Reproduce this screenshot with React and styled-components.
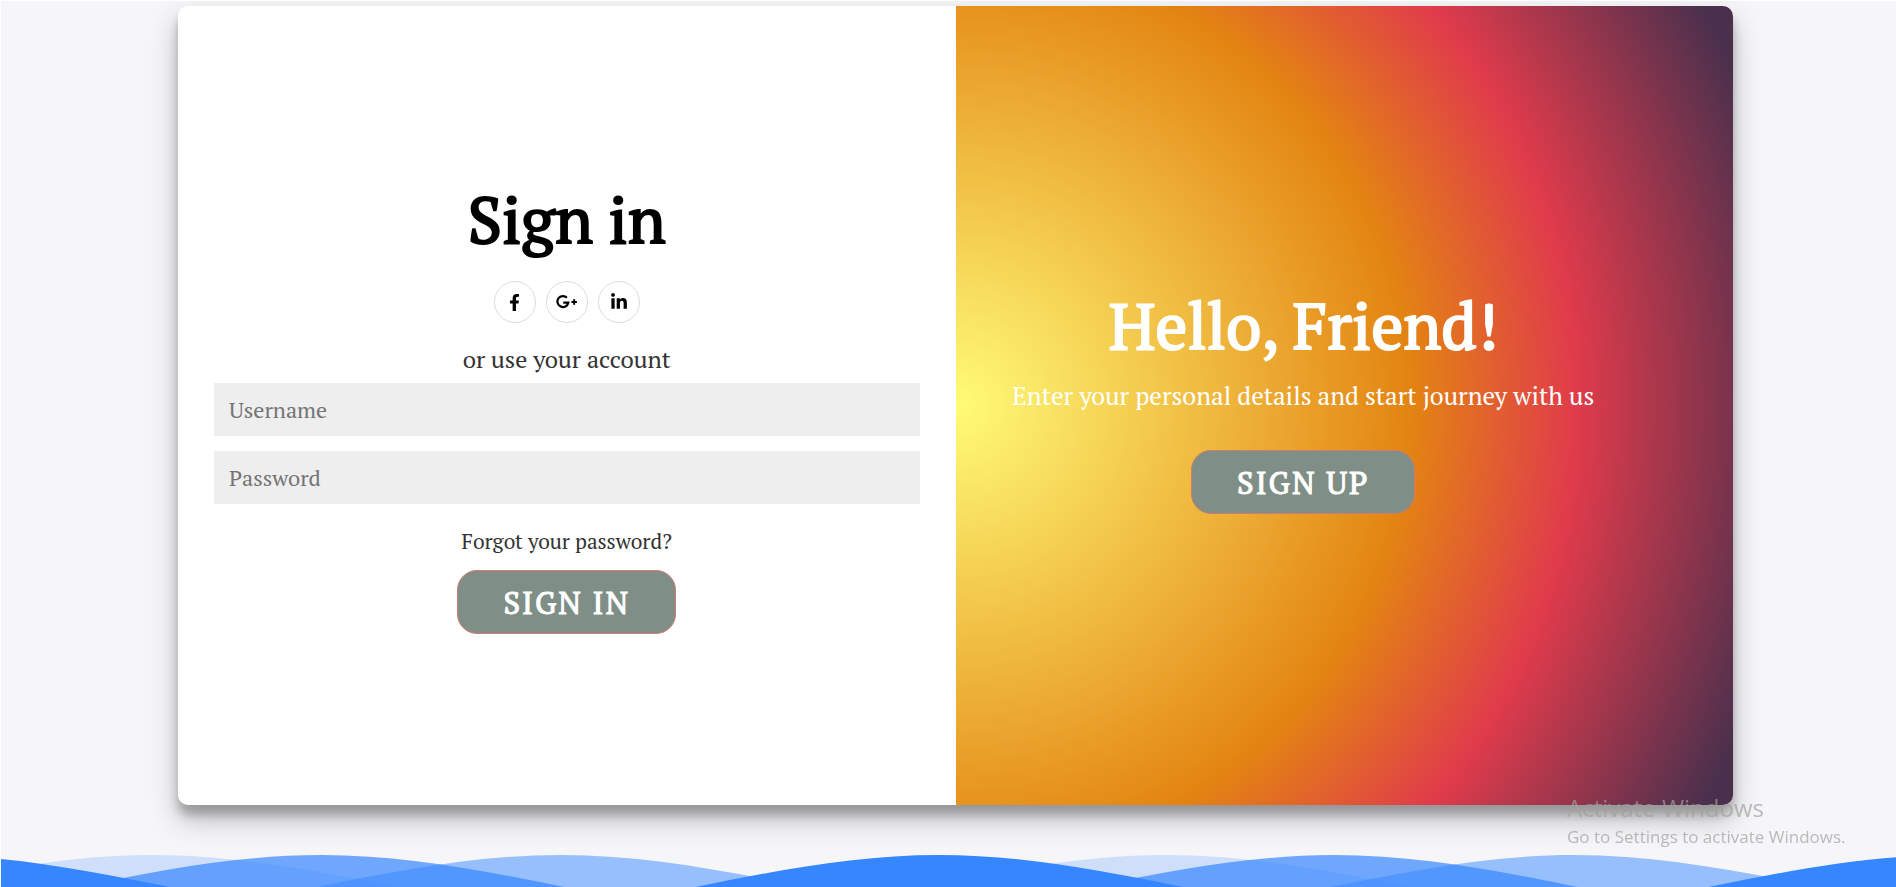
import React from "react";
import styled, { createGlobalStyle, css } from "styled-components";
import { FaFacebookF, FaLinkedinIn } from "react-icons/fa";

const GlobalStyle = createGlobalStyle`
  *, *::before, *::after { box-sizing: border-box; }
  body {
    margin: 0;
    background: #f6f6f9;
    font-family: "PT Serif", "Liberation Serif", serif;
  }
`;

const Page = styled.div`
  display: flex;
  flex-direction: column;
  min-height: 100vh;
  border-top: 1px solid #fff;
  border-left: 1px solid #fff;
  overflow: hidden;
`;

const Main = styled.main`
  padding: 5px 163px 0 177px;
`;

const Card = styled.div`
  display: grid;
  grid-template-columns: 1fr 1fr;
  min-height: calc(90vh + 1px);
  border-radius: 10px;
  overflow: hidden;
  background: #fff;
  box-shadow: 0 14px 28px rgba(0, 0, 0, 0.25), 0 10px 10px rgba(0, 0, 0, 0.22);
`;

const panel = css`
  display: flex;
  flex-direction: column;
  align-items: center;
  justify-content: center;
`;

const SignInForm = styled.form`
  ${panel}
  padding: 0 36px;
`;

const WelcomePanel = styled.section`
  ${panel}
  padding: 0 82px 14px 0;
  color: #fff;
  background: radial-gradient(
    circle farthest-corner at 0 50%,
    #fffc78 0%,
    #e38412 52%,
    #e03b4b 71%,
    #4a304d 97%
  );
`;

const Title = styled.h1`
  margin: 0;
  font-size: 64px;
  line-height: 84px;
  font-weight: 400;
  -webkit-text-stroke: 2px currentColor;
`;

const Socials = styled.div`
  display: flex;
  gap: 10px;
  margin: 20px 0 18px;
`;

const SocialLink = styled.a`
  display: flex;
  align-items: center;
  justify-content: center;
  width: 42px;
  height: 42px;
  border: 1px solid #ddd;
  border-radius: 50%;
  color: #000;
`;

const Hint = styled.p`
  margin: 0 0 6px;
  font-size: 24px;
  line-height: 36px;
  color: #333;
`;

const Lead = styled.p`
  margin: 11px 0 36px;
  font-size: 25px;
  line-height: 36px;
`;

const Fields = styled.div`
  display: flex;
  flex-direction: column;
  gap: 15px;
  width: 100%;
`;

const Field = styled.input`
  width: 100%;
  height: 53px;
  padding: 0 15px;
  border: 0;
  background: #eee;
  font-family: inherit;
  font-size: 22px;
  color: #333;

  &::placeholder {
    color: #757575;
    opacity: 1;
  }
`;

const ForgotLink = styled.a`
  margin: 21px 0 13px;
  font-size: 21px;
  line-height: 32px;
  color: #333;
  text-decoration: none;
`;

const Button = styled.button`
  height: 64px;
  padding: 0 45px;
  border: 1px solid #cf7c6c;
  border-radius: 20px;
  background: #7f8e86;
  color: #fff;
  font-family: inherit;
  font-size: 31px;
  font-weight: 400;
  letter-spacing: 2px;
  text-transform: uppercase;
  -webkit-text-stroke: 1px currentColor;
`;

const WaveBand = styled.svg`
  display: block;
  width: 100%;
  height: 32px;
  margin-top: auto;
`;

const Watermark = styled.aside`
  position: fixed;
  right: 43px;
  bottom: 38px;
  width: 286px;
  font-family: "Segoe UI", "Open Sans", sans-serif;
  color: rgba(160, 160, 160, 0.7);
  white-space: nowrap;
`;

const WatermarkTitle = styled.div`
  font-size: 24px;
  line-height: 34px;
`;

const WatermarkText = styled.div`
  font-size: 17px;
  line-height: 24px;
`;

const GooglePlus = () => (
  <svg width="22" height="22" viewBox="0 0 20 20" fill="none" stroke="currentColor" aria-hidden="true">
    <path d="M9.9 6.1A5 5 0 1 0 11.2 10.6H6.6" strokeWidth="2" />
    <path d="M16.5 7.6v5M14 10.1h5" strokeWidth="1.8" />
  </svg>
);

const PERIOD = 1013;

const waves = [
  { peak: 152, opacity: 0.2 },
  { peak: 320, opacity: 0.7 },
  { peak: 560, opacity: 0.49 },
  { peak: -75, opacity: 1 },
];

const wavePath = (peak) => {
  let d = `M${peak - PERIOD} 0`;
  for (let i = 0; i < 4; i += 1) {
    d += "c173 0 334 68 506.5 68s334 -68 506.5 -68";
  }
  return `${d}V90H${peak - PERIOD}z`;
};

const Waves = () => (
  <WaveBand viewBox="0 0 1895 32" preserveAspectRatio="none" aria-hidden="true">
    {waves.map(({ peak, opacity }) => (
      <path key={peak} d={wavePath(peak)} fill="#3686ff" fillOpacity={opacity} />
    ))}
  </WaveBand>
);

export default function App() {
  return (
    <>
      <GlobalStyle />
      <Page>
        <Main>
          <Card>
            <SignInForm onSubmit={(event) => event.preventDefault()}>
              <Title>Sign in</Title>
              <Socials>
                <SocialLink href="#facebook" aria-label="Facebook">
                  <FaFacebookF size={17} />
                </SocialLink>
                <SocialLink href="#google" aria-label="Google Plus">
                  <GooglePlus />
                </SocialLink>
                <SocialLink href="#linkedin" aria-label="LinkedIn">
                  <FaLinkedinIn size={18} />
                </SocialLink>
              </Socials>
              <Hint>or use your account</Hint>
              <Fields>
                <Field type="text" placeholder="Username" aria-label="Username" />
                <Field type="password" placeholder="Password" aria-label="Password" />
              </Fields>
              <ForgotLink href="#forgot">Forgot your password?</ForgotLink>
              <Button type="submit">Sign In</Button>
            </SignInForm>
            <WelcomePanel>
              <Title>Hello, Friend!</Title>
              <Lead>Enter your personal details and start journey with us</Lead>
              <Button type="button">Sign Up</Button>
            </WelcomePanel>
          </Card>
        </Main>
        <Waves />
      </Page>
      <Watermark>
        <WatermarkTitle>Activate Windows</WatermarkTitle>
        <WatermarkText>Go to Settings to activate Windows.</WatermarkText>
      </Watermark>
    </>
  );
}
